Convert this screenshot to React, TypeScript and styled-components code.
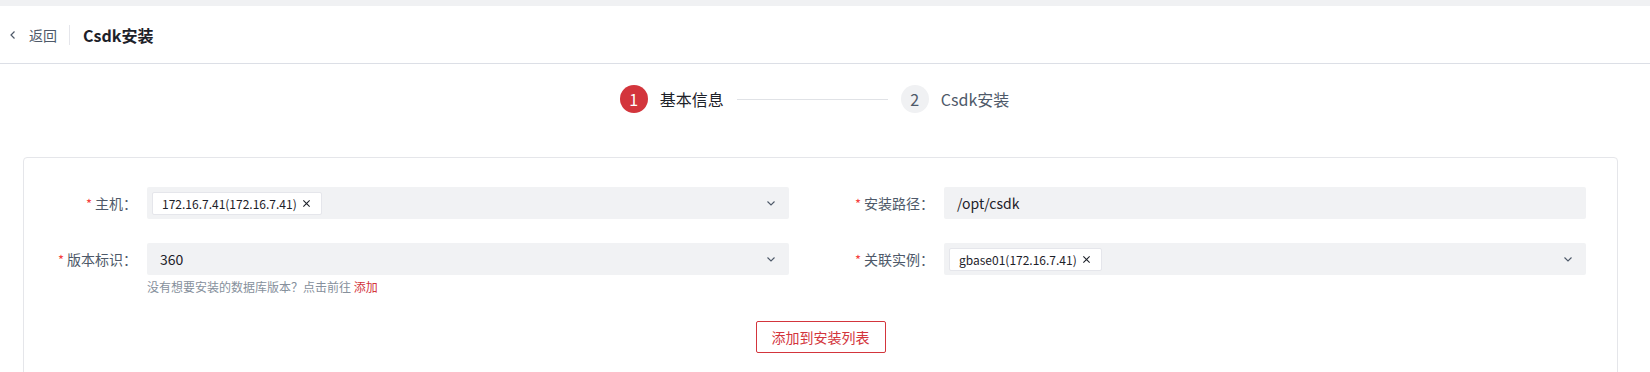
import React from "react"
import styled, { createGlobalStyle } from 'styled-components'

const GlobalStyle = createGlobalStyle`
body {
    margin: 0;
    background: #ffffff;
    font-family: "Noto Sans CJK SC", "Noto Sans", sans-serif;
    color: #1d2129;
}
`

const TopStrip = styled.div`
height: 6px;
background: #f0f1f3;
`

const Header = styled.div`
display: flex;
align-items: center;
height: 57px;
padding-left: 8px;
border-bottom: 1px solid #dcdfe6;
`

const BackLink = styled.a`
display: flex;
align-items: center;
gap: 11px;
font-size: 14px;
color: #4e5969;
cursor: pointer;
padding-right: 12px;
border-right: 1px solid #e5e6eb;
line-height: 20px;
`

const Title = styled.div`
font-size: 16px;
font-weight: 700;
color: #1d2129;
padding-left: 13px;
`

const Steps = styled.div`
display: flex;
align-items: center;
justify-content: center;
margin-top: 21px;
padding-right: 21px;
height: 28px;
`

const StepItem = styled.div`
display: flex;
align-items: center;
gap: 12px;
`

const StepDot = styled.div<{ $active?: boolean }>`
width: 28px;
height: 28px;
border-radius: 50%;
display: flex;
align-items: center;
justify-content: center;
font-size: 16px;
background: ${p => p.$active ? '#d3353c' : '#f0f1f3'};
color: ${p => p.$active ? '#ffffff' : '#4e5969'};
`

const StepText = styled.span<{ $active?: boolean }>`
font-size: 16px;
color: ${p => p.$active ? '#1d2129' : '#4e5969'};
`

const StepLine = styled.div`
width: 151px;
height: 1px;
background: #e0e2e6;
margin: 0 13px;
`

const Card = styled.div`
margin: 44px 32px 0 23px;
border: 1px solid #e5e6ea;
border-radius: 4px;
padding: 29px 0 40px;
`

const FormGrid = styled.div`
display: grid;
grid-template-columns: 1fr 1fr;
column-gap: 40px;
row-gap: 24px;
padding: 0 31px 0 8px;
`

const FormItem = styled.div`
display: flex;
align-items: flex-start;
`

const Label = styled.label`
width: 115px;
flex-shrink: 0;
height: 32px;
display: flex;
align-items: center;
justify-content: flex-end;
padding-right: 10px;
box-sizing: border-box;
font-size: 14px;
color: #4e5969;
white-space: nowrap;
`

const Star = styled.span`
color: #f53f3f;
margin-right: 3px;
font-size: 13px;
`

const Control = styled.div`
flex: 1;
min-width: 0;
`

const Field = styled.div`
height: 32px;
background: #f1f2f4;
border-radius: 2px;
display: flex;
align-items: center;
padding: 0 12px 0 5px;
box-sizing: border-box;
`

const Value = styled.span`
flex: 1;
font-size: 14px;
color: #1d2129;
padding-left: 8px;
`

const Tag = styled.span`
display: inline-flex;
align-items: center;
gap: 5px;
height: 23px;
padding: 0 10px 0 9px;
background: #ffffff;
border: 1px solid #e5e6eb;
border-radius: 2px;
font-size: 12px;
color: #1d2129;
box-sizing: border-box;
`

const Spacer = styled.span`
flex: 1;
`

const Help = styled.div`
font-size: 12px;
color: #86909c;
line-height: 20px;
margin-top: 2px;
`

const HelpLink = styled.a`
color: #d3353c;
cursor: pointer;
`

const Actions = styled.div`
display: flex;
justify-content: center;
margin-top: 24px;
`

const OutlineButton = styled.button`
width: 130px;
height: 32px;
border: 1px solid #d3353c;
border-radius: 2px;
background: #ffffff;
color: #d3353c;
font-size: 14px;
font-family: inherit;
cursor: pointer;
`

const Chevron = () => (
    <svg width="12" height="12" viewBox="0 0 12 12" fill="none">
        <path d="M2.5 4.5L6 8l3.5-3.5" stroke="#4e5969" strokeWidth="1.1" />
    </svg>
)

const Close = () => (
    <svg width="9" height="9" viewBox="0 0 10 10" fill="none">
        <path d="M1.5 1.5l7 7M8.5 1.5l-7 7" stroke="#1d2129" strokeWidth="1.2" />
    </svg>
)

export const App: React.FunctionComponent = () => {
    return (
        <>
            <GlobalStyle />
            <TopStrip />
            <Header>
                <BackLink>
                    <svg width="10" height="10" viewBox="0 0 10 10" fill="none">
                        <path d="M6.5 1.5L3 5l3.5 3.5" stroke="#4e5969" strokeWidth="1.2" />
                    </svg>
                    返回
                </BackLink>
                <Title>Csdk安装</Title>
            </Header>

            <Steps>
                <StepItem>
                    <StepDot $active>1</StepDot>
                    <StepText $active>基本信息</StepText>
                </StepItem>
                <StepLine />
                <StepItem>
                    <StepDot>2</StepDot>
                    <StepText>Csdk安装</StepText>
                </StepItem>
            </Steps>

            <Card>
                <FormGrid>
                    <FormItem>
                        <Label><Star>*</Star>主机：</Label>
                        <Control>
                            <Field>
                                <Tag>172.16.7.41(172.16.7.41)<Close /></Tag>
                                <Spacer />
                                <Chevron />
                            </Field>
                        </Control>
                    </FormItem>
                    <FormItem>
                        <Label><Star>*</Star>安装路径：</Label>
                        <Control>
                            <Field>
                                <Value>/opt/csdk</Value>
                            </Field>
                        </Control>
                    </FormItem>
                    <FormItem>
                        <Label><Star>*</Star>版本标识：</Label>
                        <Control>
                            <Field>
                                <Value>360</Value>
                                <Chevron />
                            </Field>
                            <Help>没有想要安装的数据库版本？点击前往 <HelpLink>添加</HelpLink></Help>
                        </Control>
                    </FormItem>
                    <FormItem>
                        <Label><Star>*</Star>关联实例：</Label>
                        <Control>
                            <Field>
                                <Tag>gbase01(172.16.7.41)<Close /></Tag>
                                <Spacer />
                                <Chevron />
                            </Field>
                        </Control>
                    </FormItem>
                </FormGrid>
                <Actions>
                    <OutlineButton>添加到安装列表</OutlineButton>
                </Actions>
            </Card>
        </>
    )
}

export default App
